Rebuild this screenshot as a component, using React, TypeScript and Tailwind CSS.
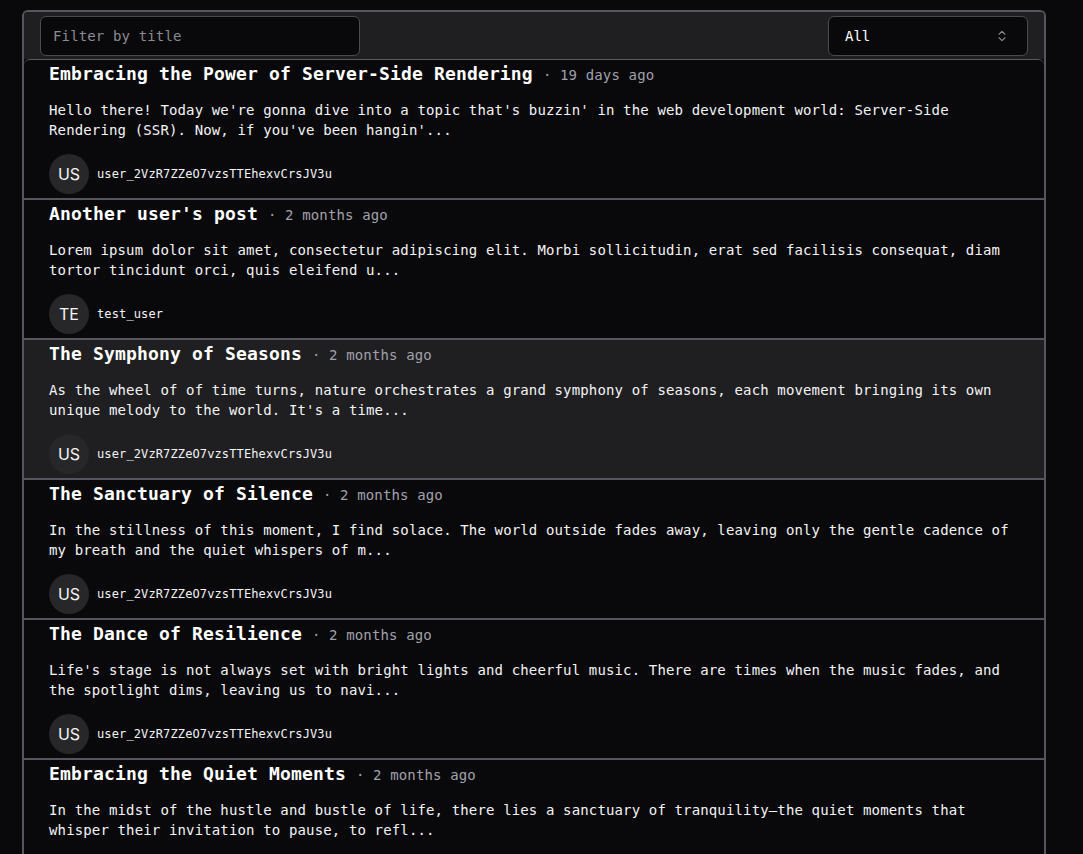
import React, { useState } from 'react';
import { ChevronsUpDown } from 'lucide-react';

interface Post {
  id: number;
  title: string;
  time: string;
  excerpt: string;
  user: string;
}

const posts: Post[] = [
  {
    id: 1,
    title: 'Embracing the Power of Server-Side Rendering',
    time: '19 days ago',
    excerpt:
      "Hello there! Today we're gonna dive into a topic that's buzzin' in the web development world: Server-Side Rendering (SSR). Now, if you've been hangin'...",
    user: 'user_2VzR7ZZeO7vzsTTEhexvCrsJV3u',
  },
  {
    id: 2,
    title: "Another user's post",
    time: '2 months ago',
    excerpt:
      'Lorem ipsum dolor sit amet, consectetur adipiscing elit. Morbi sollicitudin, erat sed facilisis consequat, diam tortor tincidunt orci, quis eleifend u...',
    user: 'test_user',
  },
  {
    id: 3,
    title: 'The Symphony of Seasons',
    time: '2 months ago',
    excerpt:
      "As the wheel of of time turns, nature orchestrates a grand symphony of seasons, each movement bringing its own unique melody to the world. It's a time...",
    user: 'user_2VzR7ZZeO7vzsTTEhexvCrsJV3u',
  },
  {
    id: 4,
    title: 'The Sanctuary of Silence',
    time: '2 months ago',
    excerpt:
      'In the stillness of this moment, I find solace. The world outside fades away, leaving only the gentle cadence of my breath and the quiet whispers of m...',
    user: 'user_2VzR7ZZeO7vzsTTEhexvCrsJV3u',
  },
  {
    id: 5,
    title: 'The Dance of Resilience',
    time: '2 months ago',
    excerpt:
      "Life's stage is not always set with bright lights and cheerful music. There are times when the music fades, and the spotlight dims, leaving us to navi...",
    user: 'user_2VzR7ZZeO7vzsTTEhexvCrsJV3u',
  },
  {
    id: 6,
    title: 'Embracing the Quiet Moments',
    time: '2 months ago',
    excerpt:
      'In the midst of the hustle and bustle of life, there lies a sanctuary of tranquility\u2014the quiet moments that whisper their invitation to pause, to refl...',
    user: 'user_2VzR7ZZeO7vzsTTEhexvCrsJV3u',
  },
];

const mono = "font-['DejaVu_Sans_Mono','Liberation_Mono',monospace]";

const PostRow: React.FC<{ post: Post; active: boolean }> = ({ post, active }) => (
  <div
    className={`border-t-2 border-[#56565c] pl-[25px] pr-[25px] pb-1 ${active ? 'bg-[#1f1f22]' : ''}`}
  >
    <div className="flex items-baseline h-7 leading-7">
      <h3 className="text-[18px] font-bold text-white tracking-[0.16px]">{post.title}</h3>
      <span className="ml-[10px] text-sm text-[#a1a1aa] tracking-[0.14px]">· {post.time}</span>
    </div>
    <p className="mt-3 text-sm leading-5 text-[#f4f4f5] tracking-[0.14px]">{post.excerpt}</p>
    <div className="mt-[14px] flex items-center gap-2">
      <div className="w-10 h-10 rounded-full bg-[#27272a] flex items-center justify-center font-['Inter',sans-serif] text-base text-[#f4f4f5]">
        {post.user.slice(0, 2).toUpperCase()}
      </div>
      <span className="text-xs text-[#f4f4f5] tracking-[0.12px]">{post.user}</span>
    </div>
  </div>
);

export default function App() {
  const [filter, setFilter] = useState('');
  const shown = posts.filter((p) => p.title.toLowerCase().includes(filter.toLowerCase()));

  return (
    <div className={`h-[854px] overflow-hidden bg-[#09090b] pt-[10px] ${mono}`}>
      <div className="ml-[22px] w-[1024px] border-x-2 border-t-2 border-[#56565c] rounded-t-md overflow-hidden">
        <div className="bg-[#1f1f22] h-[47px] flex items-center justify-between px-4">
          <input
            value={filter}
            onChange={(e) => setFilter(e.target.value)}
            placeholder="Filter by title"
            className="w-[320px] h-10 rounded-md border border-[#4a4a50] bg-[#09090b] px-3 text-sm text-white placeholder:text-[#8b8b90] outline-none tracking-[0.14px]"
          />
          <button className="w-[200px] h-10 rounded-md border border-[#4a4a50] bg-[#09090b] pl-4 pr-[18px] flex items-center justify-between text-sm text-white">
            <span>All</span>
            <ChevronsUpDown size={14} className="text-[#8b8b90]" />
          </button>
        </div>
        <div className="border-t border-[#5a5a60] rounded-t-md">
          {shown.map((post, i) => (
            <div key={post.id} className={i === 0 ? '[&>div]:border-t-0' : ''}>
              <PostRow post={post} active={post.id === 3} />
            </div>
          ))}
        </div>
      </div>
    </div>
  );
}
